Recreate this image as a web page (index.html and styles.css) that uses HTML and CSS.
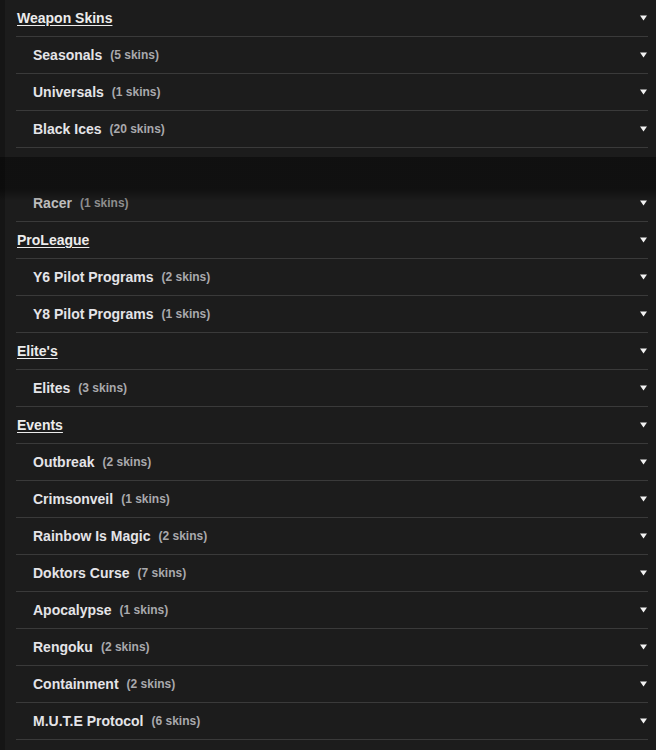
FILE: index.html
```html
<!DOCTYPE html>
<html lang="en">
<head>
<meta charset="utf-8">
<title>Skins</title>
<link rel="stylesheet" href="styles.css">
</head>
<body>
<svg width="0" height="0" class="defs" aria-hidden="true">
  <symbol id="caret" viewBox="0 0 7 6"><path d="M0 0.5H7L3.5 5.5Z" fill="#f2f2f2"/></symbol>
</svg>
<main class="panel">
  <section class="pinned">
    <div class="row head"><a class="title">Weapon Skins</a><svg class="caret"><use href="#caret"/></svg></div>
    <div class="row sub"><span class="name">Seasonals</span><span class="count">(5 skins)</span><svg class="caret"><use href="#caret"/></svg></div>
    <div class="row sub"><span class="name">Universals</span><span class="count">(1 skins)</span><svg class="caret"><use href="#caret"/></svg></div>
    <div class="row sub"><span class="name">Black Ices</span><span class="count">(20 skins)</span><svg class="caret"><use href="#caret"/></svg></div>
  </section>
  <div class="spacer"></div>
  <div class="row sub dim"><span class="name">Racer</span><span class="count">(1 skins)</span><svg class="caret"><use href="#caret"/></svg></div>
  <div class="row head"><a class="title">ProLeague</a><svg class="caret"><use href="#caret"/></svg></div>
  <div class="row sub"><span class="name">Y6 Pilot Programs</span><span class="count">(2 skins)</span><svg class="caret"><use href="#caret"/></svg></div>
  <div class="row sub"><span class="name">Y8 Pilot Programs</span><span class="count">(1 skins)</span><svg class="caret"><use href="#caret"/></svg></div>
  <div class="row head"><a class="title">Elite's</a><svg class="caret"><use href="#caret"/></svg></div>
  <div class="row sub"><span class="name">Elites</span><span class="count">(3 skins)</span><svg class="caret"><use href="#caret"/></svg></div>
  <div class="row head"><a class="title">Events</a><svg class="caret"><use href="#caret"/></svg></div>
  <div class="row sub"><span class="name">Outbreak</span><span class="count">(2 skins)</span><svg class="caret"><use href="#caret"/></svg></div>
  <div class="row sub"><span class="name">Crimsonveil</span><span class="count">(1 skins)</span><svg class="caret"><use href="#caret"/></svg></div>
  <div class="row sub"><span class="name">Rainbow Is Magic</span><span class="count">(2 skins)</span><svg class="caret"><use href="#caret"/></svg></div>
  <div class="row sub"><span class="name">Doktors Curse</span><span class="count">(7 skins)</span><svg class="caret"><use href="#caret"/></svg></div>
  <div class="row sub"><span class="name">Apocalypse</span><span class="count">(1 skins)</span><svg class="caret"><use href="#caret"/></svg></div>
  <div class="row sub"><span class="name">Rengoku</span><span class="count">(2 skins)</span><svg class="caret"><use href="#caret"/></svg></div>
  <div class="row sub"><span class="name">Containment</span><span class="count">(2 skins)</span><svg class="caret"><use href="#caret"/></svg></div>
  <div class="row sub"><span class="name">M.U.T.E Protocol</span><span class="count">(6 skins)</span><svg class="caret"><use href="#caret"/></svg></div>
</main>
</body>
</html>
```

FILE: styles.css
```css
html, body {
  margin: 0;
  padding: 0;
  background: #151515;
  font-family: "Liberation Sans", Arial, sans-serif;
  overflow: hidden;
}
.defs { position: absolute; }
.panel {
  margin-left: 5px;
  background: #1c1c1c;
  padding: 0 8px 40px 11px;
  min-height: 100vh;
}
.pinned {
  position: relative;
  z-index: 2;
  background: #1c1c1c;
  margin: 0 -8px 0 -11px;
  padding: 0 8px 9px 11px;
}
.pinned::after {
  content: "";
  position: absolute;
  left: -5px;
  right: 0;
  top: 100%;
  height: 44px;
  background: linear-gradient(rgba(0,0,0,0.42), rgba(0,0,0,0.42) 72%, rgba(0,0,0,0));
  pointer-events: none;
}
.spacer {
  height: 28px;
}
.row {
  height: 36px;
  border-bottom: 1px solid #3a3a3a;
  display: flex;
  align-items: center;
  font-weight: bold;
}
.head { padding-left: 1px; }
.sub { padding-left: 17px; }
.title {
  color: #ececec;
  font-size: 14px;
  text-decoration: underline;
  text-underline-offset: 2px;
}
.name {
  color: #e4e4e8;
  font-size: 14px;
}
.count {
  color: #a9a9ad;
  font-size: 12px;
  margin-left: 8px;
}
.caret {
  width: 7px;
  height: 6px;
  margin-left: auto;
  margin-right: 1px;
}
.dim .name { color: #bdbdbd; }
.dim .count { color: #8e8e8e; }
```
